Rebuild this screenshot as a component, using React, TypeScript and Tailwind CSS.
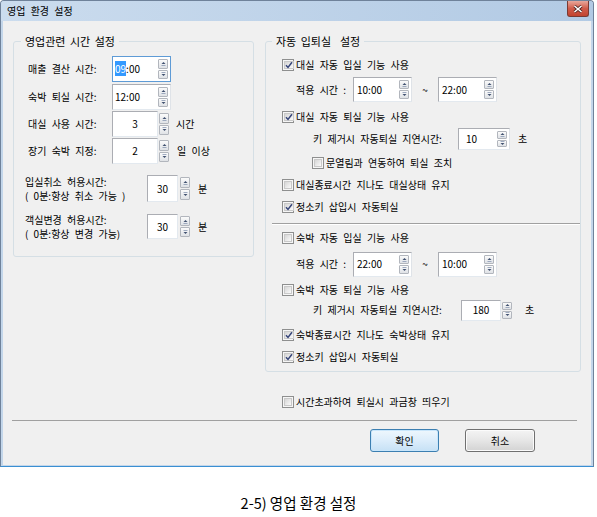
import React from "react";

const font = "font-['Noto_Sans_CJK_KR','Noto_Sans',sans-serif]";

function Arrow({up}: {up: boolean}) {
    return (
        <svg width="5" height="5" viewBox="0 0 5 5">
            {up ? (
                <>
                    <path d="M0.5 3 L2.5 1 L4.5 3 Z" fill="#40516f"/>
                    <rect x="0.5" y="4" width="4" height="0.8" fill="#8a99b3"/>
                </>
            ) : (
                <>
                    <rect x="0.5" y="0.2" width="4" height="0.8" fill="#8a99b3"/>
                    <path d="M0.5 2 L2.5 4 L4.5 2 Z" fill="#40516f"/>
                </>
            )}
        </svg>
    );
}

function SpinBtns({className = ""}: {className?: string}) {
    return (
        <div className={"flex flex-col gap-[1px] w-[10px] " + className}>
            <div className="flex-1 flex items-center justify-center border border-[#b2b6bd] rounded-[1px] bg-linear-to-b from-[#fbfbfb] to-[#dfe2e6]">
                <Arrow up/>
            </div>
            <div className="flex-1 flex items-center justify-center border border-[#b2b6bd] rounded-[1px] bg-linear-to-b from-[#fbfbfb] to-[#dfe2e6]">
                <Arrow up={false}/>
            </div>
        </div>
    );
}

interface SpinProps {
    value: React.ReactNode;
    w: number;
    h: number;
    pad?: string;
    center?: boolean;
    focus?: boolean;
}

// 숫자 박스 안에 스핀버튼이 들어간 형태
function Spin({value, w, h, pad = "pl-[3px]", center, focus}: SpinProps) {
    return (
        <div
            style={{width: w, height: h}}
            className={"flex items-stretch bg-white border " + (focus ? "border-[#5e9bd6]" : "border-[#abadb3] border-r-[#dfe3e8] border-b-[#e3e9ef]")}
        >
            <div className={"flex-1 flex items-center " + (center ? "justify-center " : "") + pad}>{value}</div>
            <SpinBtns className="py-[2px] mr-[2px]"/>
        </div>
    );
}

// 스핀버튼이 박스 바깥에 붙은 형태
function SpinOut({value, w, h, gap = "ml-[1px]"}: {value: string; w: number; h: number; gap?: string}) {
    return (
        <div className="flex items-stretch" style={{height: h}}>
            <div style={{width: w}} className="flex items-center justify-center bg-white border border-[#abadb3] border-r-[#e3e9ef] border-b-[#e3e9ef]">
                {value}
            </div>
            <SpinBtns className={"py-[2px] " + gap}/>
        </div>
    );
}

function Check({checked, label, className = ""}: {checked?: boolean; label: string; className?: string}) {
    return (
        <div className={"flex items-center " + className}>
            <span className="w-[12px] h-[12px] flex p-[1px] border border-[#8e8f8f] bg-[#f6f6f6]">
                <span className="flex-1 flex items-center justify-center border border-[#c9c9c9] bg-linear-to-br from-[#d6d6d6] to-[#fafafa]">
                    {checked && (
                        <svg width="8" height="8" viewBox="0 0 8 8">
                            <path d="M1 4.2 L3 6.4 L7 1.2" fill="none" stroke="#364579" strokeWidth="1.5"/>
                        </svg>
                    )}
                </span>
            </span>
            <span className="ml-[2px] [word-spacing:3px]">{label}</span>
        </div>
    );
}

function CloseBtn() {
    return (
        <div className="w-[22px] h-[16px] mr-[4px] flex items-center justify-center rounded-b-[3px] border border-t-0 border-[#7a3a33] bg-linear-to-b from-[#e8a79b] via-[#cf5b4a] to-[#c2432f]">
            <svg width="10" height="8" viewBox="0 0 10 8">
                <path d="M1.5 1 L8.5 7 M8.5 1 L1.5 7" stroke="#4a2320" strokeWidth="3"/>
                <path d="M1.5 1 L8.5 7 M8.5 1 L1.5 7" stroke="#ffffff" strokeWidth="1.6"/>
            </svg>
        </div>
    );
}

const App: React.FC = () => {
    return (
        <div className={`w-[597px] h-[517px] bg-white text-black ${font}`}>
            <div className="w-[594px] h-[467px] flex flex-col border border-[#6f829a] border-b-[#3a8fd2] rounded-t-[4px] bg-[#c3d6ea]">
                {/* 타이틀 바 */}
                <div className="h-[20px] flex items-start justify-between rounded-t-[3px] bg-linear-to-r from-[#cbdcee] to-[#b2cae4]">
                    <span className="ml-[6px] mt-[4px] text-[10px] leading-[12px] [word-spacing:3px]">영업 환경 설정</span>
                    <CloseBtn/>
                </div>

                <div className="flex-1 mx-[2px] mb-[1px] bg-[#f0f0f0] text-[10px] leading-[12px] flex flex-col">
                    <div className="pt-[13px] flex items-start">
                        {/* 영업관련 시간 설정 */}
                        <fieldset className="ml-[10px] w-[241px] h-[223px] border border-[#d5dfe5] rounded-[3px]">
                            <legend className="ml-[7px] px-[4px] text-[11px] leading-[14px] [word-spacing:2px]">영업관련 시간 설정</legend>
                            <div className="pl-[14px] flex flex-col">
                                <div className="mt-[8px] h-[26px] flex items-center">
                                    <span className="w-[84px] [word-spacing:3px]">매출 결산 시간:</span>
                                    <Spin w={59} h={26} focus pad="pl-[2px]" value={<span><span className="bg-[#3399ff] text-white">09</span>:00</span>}/>
                                </div>
                                <div className="mt-[2px] h-[26px] flex items-center">
                                    <span className="w-[84px] [word-spacing:3px]">숙박 퇴실 시간:</span>
                                    <Spin w={59} h={26} pad="pl-[2px]" value="12:00"/>
                                </div>
                                <div className="mt-[1px] h-[26px] flex items-center">
                                    <span className="w-[84px] [word-spacing:3px]">대실 사용 시간:</span>
                                    <SpinOut w={46} h={26} value="3"/>
                                    <span className="ml-[7px]">시간</span>
                                </div>
                                <div className="mt-[1px] h-[26px] flex items-center">
                                    <span className="w-[84px] [word-spacing:3px]">장기 숙박 지정:</span>
                                    <SpinOut w={46} h={26} value="2"/>
                                    <span className="ml-[8px] [word-spacing:3px]">일 이상</span>
                                </div>
                                <div className="mt-[11px] h-[27px] -ml-[3px] flex items-center">
                                    <div className="w-[122px] flex flex-col gap-[1px] [word-spacing:3px]">
                                        <span className="leading-[13px]">입실취소 허용시간:</span>
                                        <span className="leading-[13px]">( 0분:항상 취소 가능 )</span>
                                    </div>
                                    <SpinOut w={31} h={27} value="30" gap="ml-[2px]"/>
                                    <span className="ml-[8px]">분</span>
                                </div>
                                <div className="mt-[12px] h-[25px] -ml-[3px] flex items-center">
                                    <div className="w-[122px] flex flex-col gap-[1px] [word-spacing:3px]">
                                        <span className="leading-[13px]">객실변경 허용시간:</span>
                                        <span className="leading-[13px]">( 0분:항상 변경 가능)</span>
                                    </div>
                                    <SpinOut w={31} h={25} value="30" gap="ml-[2px]"/>
                                    <span className="ml-[8px]">분</span>
                                </div>
                            </div>
                        </fieldset>

                        {/* 자동 입퇴실 설정 */}
                        <fieldset className="ml-[11px] w-[316px] h-[338px] border border-[#d5dfe5] rounded-[3px]">
                            <legend className="ml-[6px] px-[4px] text-[11px] leading-[14px] whitespace-pre [word-spacing:2px]">자동 입퇴실  설정</legend>
                            <div className="pl-[16px] flex flex-col">
                                <Check checked label="대실 자동 입실 기능 사용" className="mt-[6px] h-[22px]"/>
                                <div className="h-[27px] pl-[14px] flex items-center">
                                    <span className="w-[57px] [word-spacing:3px]">적용 시간 :</span>
                                    <Spin w={59} h={25} value="10:00"/>
                                    <span className="w-[26px] text-center">~</span>
                                    <Spin w={59} h={25} value="22:00"/>
                                </div>
                                <Check checked label="대실 자동 퇴실 기능 사용" className="mt-[3px] h-[22px]"/>
                                <div className="h-[22px] pl-[31px] flex items-center">
                                    <span className="w-[145px] [word-spacing:3px]">키 제거시 자동퇴실 지연시간:</span>
                                    <Spin w={52} h={22} pad="pl-[7px]" value="10"/>
                                    <span className="ml-[8px]">초</span>
                                </div>
                                <Check label="문열림과 연동하여 퇴실 조치" className="mt-[2px] h-[22px] ml-[30px]"/>
                                <Check label="대실종료시간 지나도 대실상태 유지" className="h-[21px]"/>
                                <Check checked label="정소키 삽입시 자동퇴실" className="mt-[1px] h-[22px]"/>
                                <div className="mt-[5px] -ml-[10px] h-[2px] border-t border-t-[#a0a0a0] border-b border-b-white"/>
                                <Check label="숙박 자동 입실 기능 사용" className="mt-[2px] h-[22px]"/>
                                <div className="mt-[2px] h-[26px] pl-[14px] flex items-center">
                                    <span className="w-[57px] [word-spacing:3px]">적용 시간 :</span>
                                    <Spin w={59} h={25} value="22:00"/>
                                    <span className="w-[26px] text-center">~</span>
                                    <Spin w={59} h={25} value="10:00"/>
                                </div>
                                <Check label="숙박 자동 퇴실 기능 사용" className="mt-[4px] h-[18px]"/>
                                <div className="h-[22px] pl-[31px] flex items-center">
                                    <span className="w-[148px] [word-spacing:3px]">키 제거시 자동퇴실 지연시간:</span>
                                    <SpinOut w={40} h={21} value="180"/>
                                    <span className="ml-[13px]">초</span>
                                </div>
                                <Check checked label="숙박종료시간 지나도 숙박상태 유지" className="mt-[3px] h-[22px]"/>
                                <Check checked label="정소키 삽입시 자동퇴실" className="h-[22px]"/>
                            </div>
                        </fieldset>
                    </div>

                    <Check label="시간초과하여 퇴실시 과금창 띄우기" className="ml-[279px] mt-[20px] h-[20px]"/>
                    <div className="ml-[9px] mt-[8px] w-[565px] h-px bg-[#a0a0a0]"/>
                    <div className="mt-[8px] flex">
                        <button className="ml-[367px] w-[69px] h-[23px] rounded-[3px] border border-[#3c7fb1] bg-linear-to-b from-[#eef7fd] via-[#dcedfb] to-[#c6e1f5] text-[10px] shadow-[inset_0_0_0_1px_#c9e6fb]">확인</button>
                        <button className="ml-[26px] w-[70px] h-[23px] rounded-[3px] border border-[#707070] bg-linear-to-b from-[#f4f4f4] via-[#e6e6e6] to-[#d3d3d3] text-[10px] shadow-[inset_0_0_0_1px_#fbfbfb]">취소</button>
                    </div>
                </div>
            </div>
            <div className="mt-[26px] text-center text-[14.5px] leading-[20px]">2-5) 영업 환경 설정</div>
        </div>
    );
};

export default App;
